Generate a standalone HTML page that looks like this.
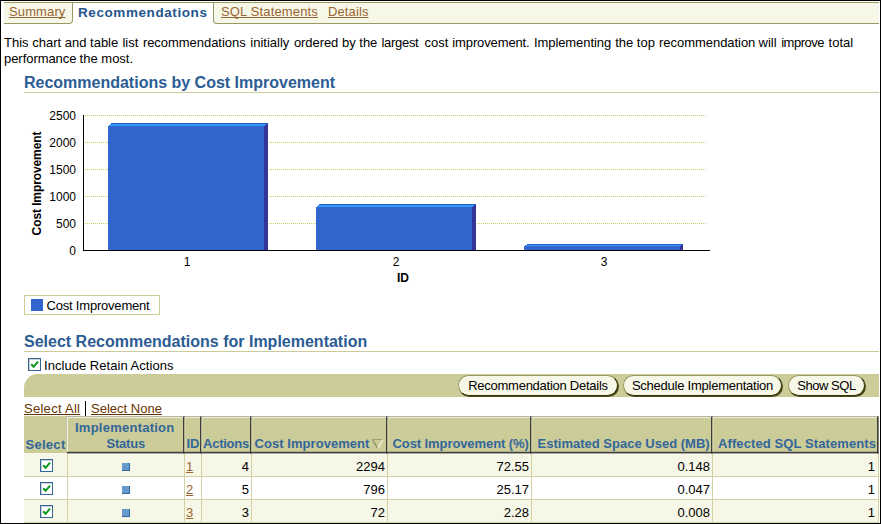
<!DOCTYPE html>
<html><head><meta charset="utf-8"><title>Recommendations</title>
<style>
html,body{margin:0;padding:0;}
body{width:881px;height:524px;overflow:hidden;background:#fff;position:relative;font-family:"Liberation Sans",Arial,Helvetica,sans-serif;font-size:13px;color:#000;}
.abs{position:absolute;white-space:nowrap;}
a{color:#663300;text-decoration:underline;text-decoration-skip-ink:none;}
.frame div{position:absolute;background:#000;}
.tabbar{position:absolute;left:4px;top:2px;width:875px;height:22px;}
.tab1{position:absolute;left:0;top:0;width:68px;height:20px;background:#f7f7e7;border-top:1px solid #999966;border-bottom:1px solid #999966;border-right:1px solid #999966;border-bottom-right-radius:4px;}
.tabsel{position:absolute;left:69px;top:0;width:141px;height:21px;border-top:1px solid #999966;background:#fff;}
.tab2{position:absolute;left:209px;top:0;width:665px;height:20px;background:#f7f7e7;border-top:1px solid #999966;border-bottom:1px solid #999966;border-left:1px solid #999966;border-bottom-left-radius:4px;}
.tabbar a{color:#996633;}
.h1{position:absolute;left:24px;color:#2b5c93;font-weight:bold;font-size:16px;line-height:20px;white-space:nowrap;}
.hr{position:absolute;left:24px;width:855px;height:1px;background:#cccc99;}
.th{position:absolute;top:416px;height:37px;background:#cccc99;color:#336699;font-weight:bold;}
.th span{position:absolute;white-space:nowrap;line-height:16px;top:35px;}
.td{position:absolute;box-sizing:border-box;height:23px;border-left:1px solid #d2d2a2;border-bottom:1px solid #d2d2a2;line-height:16px;}
.r1{top:453px;background:#f7f7e7;height:24px;}
.r2{top:477px;background:#fff;}
.r3{top:500px;background:#f7f7e7;}
.td span{position:absolute;top:5px;white-space:nowrap;}
.td a{color:#996633;}
.r1 span{top:6px;}
.cb{position:absolute;width:11px;height:11px;border:1px solid #336699;background:#fff;box-shadow:inset 1px 1px 0 #d0d0d0;}
.cb svg{position:absolute;left:1px;top:1px;}
.sq{position:absolute;width:7px;height:7px;background:#6699cc;border-right:1px solid #336699;border-bottom:1px solid #336699;}
.btn{position:absolute;top:375px;height:19px;background:#f7f7e7;border:1px solid;border-color:#999966 #333300 #333300 #999966;border-radius:11px;box-shadow:1px 1px 0 #4d4d1a;font-size:13px;line-height:19px;text-align:center;white-space:nowrap;}
</style></head><body>
<div class="frame"><div style="left:0;top:0;width:881px;height:1px"></div><div style="left:0;top:0;width:1px;height:524px"></div><div style="left:880px;top:0;width:1px;height:524px"></div><div style="left:0;top:523px;width:881px;height:1px"></div></div>
<div class="tabbar">
 <div class="tab1"></div><div class="tabsel"></div><div class="tab2"></div>
 <a id="t1" class="abs" style="left:5px;top:2px;line-height:16px;letter-spacing:0.125px">Summary</a>
 <span id="t2" class="abs" style="left:74px;top:3px;line-height:16px;font-size:13.5px;font-weight:bold;color:#25568f;letter-spacing:0.581px;">Recommendations</span>
 <a id="t3" class="abs" style="left:217px;top:2px;line-height:16px;letter-spacing:0.15px;">SQL Statements</a>
 <a id="t4" class="abs" style="left:324px;top:2px;line-height:16px;letter-spacing:0.107px">Details</a>
</div>
<div id="p1" style="line-height:16px;"><span class="abs" style="left:4px;top:35px">This</span> <span class="abs" style="left:32.19px;top:35px">chart</span> <span class="abs" style="left:64.72px;top:35px">and</span> <span class="abs" style="left:90.05px;top:35px">table</span> <span class="abs" style="left:122.38px;top:35px">list</span> <span class="abs" style="left:142.89px;top:35px;letter-spacing:-0.04px">recommendations</span> <span class="abs" style="left:250.34px;top:35px">initially</span> <span class="abs" style="left:293.98px;top:35px;letter-spacing:-0.08px">ordered</span> <span class="abs" style="left:341.92px;top:35px">by</span> <span class="abs" style="left:359.28px;top:35px">the</span> <span class="abs" style="left:381.48px;top:35px;letter-spacing:-0.3px">largest</span> <span class="abs" style="left:424.44px;top:35px">cost</span> <span class="abs" style="left:452.31px;top:35px;letter-spacing:-0.12px">improvement.</span> <span class="abs" style="left:533.98px;top:35px;letter-spacing:-0.08px">Implementing</span> <span class="abs" style="left:615.16px;top:35px">the</span> <span class="abs" style="left:636.86px;top:35px">top</span> <span class="abs" style="left:659.06px;top:35px;letter-spacing:-0.04px">recommendation</span> <span class="abs" style="left:758.52px;top:35px">will</span> <span class="abs" style="left:781.2px;top:35px;letter-spacing:-0.5px">improve</span> <span class="abs" style="left:828.58px;top:35px">total</span>
<span class="abs" style="left:4px;top:51px;letter-spacing:-0.05px">performance</span> <span class="abs" style="left:79.61px;top:51px">the</span> <span class="abs" style="left:101.31px;top:51px">most.</span></div>
<div id="h1" class="h1" style="top:73px;letter-spacing:-0.005px">Recommendations by Cost Improvement</div>
<div class="hr" style="top:92px;"></div>
<svg class="abs" style="left:0;top:100px;" width="881" height="220" viewBox="0 100 881 220" font-family="Liberation Sans, Arial, sans-serif">
 <g stroke="#cccc66" stroke-width="1" stroke-dasharray="1 1" shape-rendering="crispEdges">
  <line x1="85" y1="115.5" x2="707" y2="115.5"/><line x1="85" y1="142.5" x2="707" y2="142.5"/><line x1="85" y1="169.5" x2="707" y2="169.5"/><line x1="85" y1="196.5" x2="707" y2="196.5"/><line x1="85" y1="223.5" x2="707" y2="223.5"/>
 </g>
 <g shape-rendering="crispEdges">
  <polygon points="108,126 112,123 268,123 264,126" fill="#3399ff"/><polygon points="264,126 268,123 268,250 264,250" fill="#333399"/><rect x="108" y="126" width="156" height="124" fill="#3366cc"/>
  <polygon points="316,207 320,204 476,204 472,207" fill="#3399ff"/><polygon points="472,207 476,204 476,250 472,250" fill="#333399"/><rect x="316" y="207" width="156" height="43" fill="#3366cc"/>
  <polygon points="524,246 528,244 683,244 680,246" fill="#3399ff"/><polygon points="680,246 683,244 683,250 680,250" fill="#333399"/><rect x="524" y="246" width="156" height="4" fill="#3366cc"/>
  <rect x="111" y="123" width="157" height="1" fill="#2a5cc8"/><rect x="319" y="204" width="157" height="1" fill="#2a5cc8"/><rect x="527" y="244" width="156" height="1" fill="#2a5cc8"/>
  <rect x="83" y="115" width="1" height="136" fill="#000"/><rect x="83" y="250" width="627" height="1" fill="#000"/>
 </g>
 <g font-size="12" text-anchor="end" fill="#000">
  <text x="76" y="120">2500</text><text x="76" y="147">2000</text><text x="76" y="174">1500</text><text x="76" y="201">1000</text><text x="76" y="228">500</text><text x="76" y="255">0</text>
 </g>
 <g font-size="12" text-anchor="middle" fill="#000">
  <text x="187" y="266">1</text><text x="396" y="266">2</text><text x="604" y="266">3</text>
  <text x="403" y="282" font-weight="bold">ID</text>
  <text transform="translate(40.5,183.5) rotate(-90)" font-weight="bold" letter-spacing="-0.1">Cost Improvement</text>
 </g>
 <rect x="24.5" y="295.5" width="135" height="19" fill="#fff" stroke="#cccc99"/>
 <rect x="31" y="299" width="12" height="12" fill="#3366cc"/>
 <text x="46.5" y="310" font-size="13" letter-spacing="-0.2">Cost Improvement</text>
</svg>
<div id="h2" class="h1" style="top:332px;">Select Recommendations for Implementation</div>
<div class="hr" style="top:351px;"></div>
<div class="cb" style="left:28px;top:358px;"><svg width="9" height="9" viewBox="0 0 9 9"><path d="M1.2 4.2 L3.6 6.8 L8 1.6" fill="none" stroke="#0a9a1e" stroke-width="2"/></svg></div>
<div id="inc" class="abs" style="left:44px;top:358px;line-height:16px;letter-spacing:0.039px">Include Retain Actions</div>
<div class="abs" style="left:24px;top:374px;width:855px;height:23px;background:#cccc99;border-top-left-radius:14px 14px;"></div>
<div id="b1" class="btn" style="left:458px;width:158px;letter-spacing:-0.256px">Recommendation Details</div>
<div id="b2" class="btn" style="left:623px;width:157px;letter-spacing:-0.239px">Schedule Implementation</div>
<div id="b3" class="btn" style="left:788px;width:75px;letter-spacing:-0.47px">Show SQL</div>
<a id="sa" class="abs" style="left:24px;top:401px;line-height:16px;letter-spacing:0.277px">Select All</a>
<div class="abs" style="left:85px;top:401px;width:1px;height:15px;background:#000;"></div>
<a id="sn" class="abs" style="left:91px;top:401px;line-height:16px;letter-spacing:0.016px">Select None</a>
<div class="th" style="left:24px;width:42px;"><span id="hSel" style="left:1.5px;top:21px;letter-spacing:0.281px">Select</span></div>
<div class="th" style="left:66px;width:119px;"><span id="hImp" style="left:9px;top:4px;letter-spacing:0.244px">Implementation</span><span id="hSta" style="left:40.5px;top:20px;letter-spacing:-0.206px">Status</span></div>
<div class="th" style="left:184px;width:18px;"><span id="hID" style="left:2.5px;top:20px;letter-spacing:0px">ID</span></div>
<div class="th" style="left:201px;width:51px;"><span id="hAct" style="left:2px;top:20px;letter-spacing:-0.239px">Actions</span></div>
<div class="th" style="left:251px;width:137px;"><span id="hCI" style="left:3.5px;top:20px;letter-spacing:0.054px">Cost Improvement</span></div>
<div class="th" style="left:387px;width:145px;"><span id="hCP" style="left:5.5px;top:20px;letter-spacing:-0.088px">Cost Improvement (%)</span></div>
<div class="th" style="left:531px;width:182px;"><span id="hES" style="left:6.5px;top:20px;letter-spacing:0.01px">Estimated Space Used (MB)</span></div>
<div class="th" style="left:712px;width:167px;"><span id="hAS" style="left:6px;top:20px;letter-spacing:0.096px">Affected SQL Statements</span></div>
<div class="td r1" style="left:24px;width:43px;border-left:none"><div class="cb" style="left:16px;top:6px;"><svg width="9" height="9" viewBox="0 0 9 9"><path d="M1.2 4.2 L3.6 6.8 L8 1.6" fill="none" stroke="#0a9a1e" stroke-width="2"/></svg></div></div>
<div class="td r1" style="left:67px;width:117px;"><div class="sq" style="left:54px;top:10px;"></div></div>
<div class="td r1" style="left:184px;width:17px;"><span style="left:1px"><a>1</a></span></div>
<div class="td r1" style="left:201px;width:50px"><span style="right:2px">4</span></div>
<div class="td r1" style="left:251px;width:136px"><span style="right:2px">2294</span></div>
<div class="td r1" style="left:387px;width:144px"><span style="right:2px">72.55</span></div>
<div class="td r1" style="left:531px;width:181px"><span style="right:2px">0.148</span></div>
<div class="td r1" style="left:712px;width:167px;border-right:1px solid #d2d2a2"><span style="right:3px">1</span></div>
<div class="td r2" style="left:24px;width:43px;border-left:none"><div class="cb" style="left:16px;top:5px;"><svg width="9" height="9" viewBox="0 0 9 9"><path d="M1.2 4.2 L3.6 6.8 L8 1.6" fill="none" stroke="#0a9a1e" stroke-width="2"/></svg></div></div>
<div class="td r2" style="left:67px;width:117px;"><div class="sq" style="left:54px;top:9px;"></div></div>
<div class="td r2" style="left:184px;width:17px;"><span style="left:1px"><a>2</a></span></div>
<div class="td r2" style="left:201px;width:50px"><span style="right:2px">5</span></div>
<div class="td r2" style="left:251px;width:136px"><span style="right:2px">796</span></div>
<div class="td r2" style="left:387px;width:144px"><span style="right:2px">25.17</span></div>
<div class="td r2" style="left:531px;width:181px"><span style="right:2px">0.047</span></div>
<div class="td r2" style="left:712px;width:167px;border-right:1px solid #d2d2a2"><span style="right:3px">1</span></div>
<div class="td r3" style="left:24px;width:43px;border-left:none"><div class="cb" style="left:16px;top:5px;"><svg width="9" height="9" viewBox="0 0 9 9"><path d="M1.2 4.2 L3.6 6.8 L8 1.6" fill="none" stroke="#0a9a1e" stroke-width="2"/></svg></div></div>
<div class="td r3" style="left:67px;width:117px;"><div class="sq" style="left:54px;top:9px;"></div></div>
<div class="td r3" style="left:184px;width:17px;"><span style="left:1px"><a>3</a></span></div>
<div class="td r3" style="left:201px;width:50px"><span style="right:2px">3</span></div>
<div class="td r3" style="left:251px;width:136px"><span style="right:2px">72</span></div>
<div class="td r3" style="left:387px;width:144px"><span style="right:2px">2.28</span></div>
<div class="td r3" style="left:531px;width:181px"><span style="right:2px">0.008</span></div>
<div class="td r3" style="left:712px;width:167px;border-right:1px solid #d2d2a2"><span style="right:3px">1</span></div>
<svg class="abs" style="left:0;top:410px" width="881" height="50" viewBox="0 410 881 50">
<rect x="66" y="416" width="812.5" height="1" fill="#b4b4a4"/>
<rect x="67" y="417" width="811" height="1" fill="#eeeed8"/>
<rect x="66" y="416" width="1" height="37" fill="#c4c4ac"/>
<rect x="67" y="417" width="1" height="35" fill="#f2f2e2"/>
<rect x="183.0" y="416.5" width="1.5" height="37" fill="#3e3e3e"/>
<rect x="184.5" y="418" width="1" height="34" fill="#dcdcb4"/>
<rect x="200.0" y="416.5" width="1.5" height="37" fill="#3e3e3e"/>
<rect x="201.5" y="418" width="1" height="34" fill="#dcdcb4"/>
<rect x="250.0" y="416.5" width="1.5" height="37" fill="#3e3e3e"/>
<rect x="251.5" y="418" width="1" height="34" fill="#dcdcb4"/>
<rect x="386.0" y="416.5" width="1.5" height="37" fill="#3e3e3e"/>
<rect x="387.5" y="418" width="1" height="34" fill="#dcdcb4"/>
<rect x="530.0" y="416.5" width="1.5" height="37" fill="#3e3e3e"/>
<rect x="531.5" y="418" width="1" height="34" fill="#dcdcb4"/>
<rect x="711.0" y="416.5" width="1.5" height="37" fill="#3e3e3e"/>
<rect x="712.5" y="418" width="1" height="34" fill="#dcdcb4"/>
<rect x="877.0" y="416.5" width="1.5" height="37" fill="#3e3e3e"/>
<rect x="67" y="451.8" width="811.5" height="1.6" fill="#3e3e3e"/>
<path d="M372.5 439.5 L377.7 448.5" stroke="#8f8f5c" stroke-width="1.4" fill="none"/><path d="M372.5 439.5 L383 439.5" stroke="#a0a070" stroke-width="1" fill="none"/><path d="M383 439.5 L377.8 448.5" stroke="#f4f4dc" stroke-width="1.2" fill="none"/>
</svg>
</body></html>
